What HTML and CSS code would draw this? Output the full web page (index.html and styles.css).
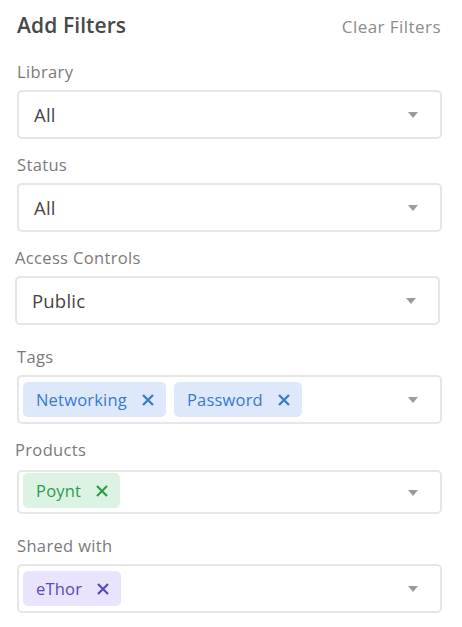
FILE: index.html
```html
<!DOCTYPE html>
<html lang="en">
<head>
    <meta charset="UTF-8">
    <meta name="viewport" content="width=device-width, initial-scale=1.0">
    <title>Add Filters</title>
    <link rel="stylesheet" href="styles.css">
</head>
<body>
    <div class="filters">
        <div class="filters-header">
            <h2>Add Filters</h2>
            <a href="#" class="clear-link">Clear Filters</a>
        </div>

        <div class="field">
            <label>Library</label>
            <div class="select">
                <span class="value">All</span>
                <span class="caret"></span>
            </div>
        </div>

        <div class="field">
            <label>Status</label>
            <div class="select">
                <span class="value">All</span>
                <span class="caret"></span>
            </div>
        </div>

        <div class="field field-shift">
            <label>Access Controls</label>
            <div class="select">
                <span class="value">Public</span>
                <span class="caret"></span>
            </div>
        </div>

        <div class="field field-tags">
            <label>Tags</label>
            <div class="select multi">
                <div class="chips">
                    <span class="chip chip-blue">Networking
                        <svg viewBox="0 0 12 12"><path d="M1 1L11 11M11 1L1 11"/></svg>
                    </span>
                    <span class="chip chip-blue">Password
                        <svg viewBox="0 0 12 12"><path d="M1 1L11 11M11 1L1 11"/></svg>
                    </span>
                </div>
                <span class="caret"></span>
            </div>
        </div>

        <div class="field field-products">
            <label class="label-shift">Products</label>
            <div class="select multi tight">
                <div class="chips">
                    <span class="chip chip-green">Poynt
                        <svg viewBox="0 0 12 12"><path d="M1 1L11 11M11 1L1 11"/></svg>
                    </span>
                </div>
                <span class="caret"></span>
            </div>
        </div>

        <div class="field">
            <label>Shared with</label>
            <div class="select multi">
                <div class="chips">
                    <span class="chip chip-purple">eThor
                        <svg viewBox="0 0 12 12"><path d="M1 1L11 11M11 1L1 11"/></svg>
                    </span>
                </div>
                <span class="caret"></span>
            </div>
        </div>
    </div>
</body>
</html>
```

FILE: styles.css
```css
body {
    margin: 0;
    padding: 0;
    background: #fff;
    font-family: "Open Sans", Arial, sans-serif;
    color: #444;
}

.filters {
    padding: 11px 20px 0 17px;
}

.filters-header {
    display: flex;
    justify-content: space-between;
    align-items: baseline;
    height: 28px;
    margin-bottom: 23px;
}
.filters-header h2 {
    margin: 0;
    font-size: 21px;
    line-height: 28px;
    font-weight: 600;
    letter-spacing: 0.1px;
    color: #484848;
}
.clear-link {
    color: #8c8c8c;
    font-size: 17px;
    letter-spacing: 0.45px;
    text-decoration: none;
    margin-right: 1px;
}

/* one filter block */
.field {
    margin-bottom: 16px;
}
.field label {
    display: block;
    font-size: 16.5px;
    line-height: 20px;
    letter-spacing: 0.35px;
    color: #7a7a7a;
    margin-bottom: 8px;
}
.field-shift {
    margin-left: -2px;
    margin-right: 2px;
}
.field-tags {
    margin-top: 22px;
}
.field-products {
    margin-bottom: 22px;
}
.field-products label {
    margin-bottom: 10px;
}
.label-shift {
    margin-left: -2px;
}

.select {
    display: flex;
    align-items: center;
    justify-content: space-between;
    height: 49px;
    box-sizing: border-box;
    border: 2px solid #e6e6e6;
    border-radius: 5px;
    padding: 0 22px 0 15px;
}
.select .value {
    font-size: 18.5px;
    letter-spacing: 0.2px;
    color: #464646;
}
.select.multi {
    padding-left: 4px;
}
.select.tight {
    height: 44px;
    align-items: flex-start;
    padding-top: 1px;
}

.caret {
    width: 0;
    height: 0;
    border-left: 5px solid transparent;
    border-right: 5px solid transparent;
    border-top: 6px solid #9b9b9b;
}
.select.tight .caret {
    margin-top: 17px;
}

.chips {
    display: flex;
    gap: 8px;
}
.chip {
    display: inline-flex;
    align-items: center;
    gap: 15px;
    height: 35px;
    padding: 0 12px 0 13px;
    border-radius: 5px;
    font-size: 16.5px;
    letter-spacing: 0.2px;
}
.chip svg {
    width: 12px;
    height: 12px;
    fill: none;
    stroke: currentColor;
    stroke-width: 2.2;
}
.chip-blue {
    background: #dde9fa;
    color: #3b78cf;
}
.chip-green {
    background: #dcf3e4;
    color: #2f9b4c;
}
.chip-purple {
    background: #e9e4fb;
    color: #5a49be;
}
```
